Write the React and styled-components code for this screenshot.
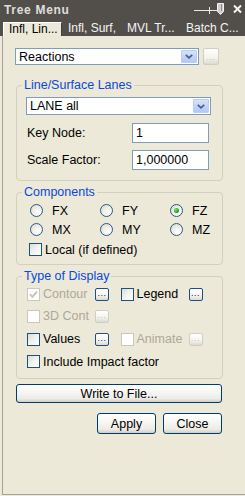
import React from 'react';
import styled, { createGlobalStyle, css } from 'styled-components';

const GlobalStyle = createGlobalStyle`
  html, body { margin: 0; padding: 0; background: #ece9d8; }
  body { font-family: "Liberation Sans", Arial, sans-serif; font-size: 12.5px; color: #000; }
  * { box-sizing: border-box; }
`;

const Window = styled.div`
  width: 245px;
  height: 496px;
  display: flex;
  flex-direction: column;
  overflow: hidden;
  background: #ece9d8;
`;

const TitleBar = styled.div`
  height: 20px;
  background: #524f4a;
  display: flex;
  align-items: center;
  padding-left: 4px;
`;

const Title = styled.div`
  flex: 1;
  color: #dedede;
  font-weight: bold;
  font-size: 12px;
  letter-spacing: 0.7px;
`;

const TitleIcons = styled.svg`
  display: block;
  flex: none;
`;

const TabStrip = styled.div`
  height: 16px;
  background: #524f4a;
  display: flex;
  align-items: flex-end;
  padding-left: 3px;
  overflow: hidden;
`;

const Tab = styled.div`
  width: 59px;
  height: 14px;
  padding-left: 6px;
  font-size: 12px;
  line-height: 13px;
  white-space: nowrap;
  flex: none;
  color: #f4f4f4;
  ${p => p.$active && css`
    background: #ece9d8;
    color: #000;
    border-top: 1px solid #ffffff;
    border-left: 1px solid #ffffff;
    border-right: 1px solid #404040;
    padding-left: 5px;
    overflow: hidden;
  `}
`;

const Body = styled.div`
  flex: 1;
  display: flex;
  padding-left: 2px;
  padding-bottom: 1px;
`;

const Panel = styled.div`
  flex: 1;
  border-left: 1px solid #a3a29c;
  border-bottom: 1px solid #a3a29c;
  padding: 12px 0 0 12px;
  display: flex;
  flex-direction: column;
  align-items: flex-start;
`;

const Row = styled.div`
  display: flex;
  align-items: center;
  gap: ${p => p.$gap || 0}px;
  height: ${p => (p.$h ? p.$h + 'px' : 'auto')};
`;

const SelectBox = styled.div`
  width: ${p => p.$w}px;
  height: ${p => p.$h}px;
  margin-top: ${p => p.$mt || 0}px;
  border: 1px solid #7f9db9;
  background: #fff;
  display: flex;
  align-items: center;
  padding: 1px 1px 1px 3px;
`;

const SelectText = styled.div`
  flex: 1;
  line-height: 14px;
`;

const DropButton = styled.div`
  width: 16px;
  align-self: stretch;
  border-radius: 1px;
  border: 1px solid #bccdf3;
  background: linear-gradient(180deg, #d6e2fb 0%, #c3d4fa 50%, #b3c8f6 100%);
  display: flex;
  align-items: center;
  justify-content: center;
`;

const DotsButton = styled.div`
  width: ${p => p.$w || 14}px;
  height: ${p => p.$h || 13}px;
  border-radius: 2px;
  border: 1px solid ${p => (p.$disabled ? '#d0cec2' : '#1b4f86')};
  background: linear-gradient(180deg, #ffffff 0%, #f4f3ee 60%, #dcd9cf 100%);
  color: ${p => (p.$disabled ? '#c4c2b6' : '#1a1a1a')};
  font-size: 9px;
  line-height: 1;
  display: flex;
  align-items: flex-end;
  justify-content: center;
  padding-bottom: 2px;
  letter-spacing: 0.5px;
  flex: none;
`;

const Group = styled.fieldset`
  margin: ${p => p.$mt}px 0 0 1px;
  width: 207px;
  border: 1px solid #d0d0bf;
  border-radius: 4px;
  padding: ${p => p.$pad};
  min-width: 0;
`;

const Legend = styled.legend`
  color: #0b48d8;
  padding: 0 2px;
  margin-left: ${p => p.$ml}px;
  font-size: 12.5px;
  line-height: 14px;
`;

const FieldRow = styled.div`
  display: flex;
  align-items: center;
  margin-top: ${p => p.$mt}px;
`;

const FieldLabel = styled.div`
  width: 106px;
  padding-left: 1px;
`;

const TextInput = styled.div`
  width: 77px;
  height: 20px;
  border: 1px solid #7f9db9;
  background: #fff;
  padding-left: 3px;
  line-height: 18px;
`;

const RadioGrid = styled.div`
  display: grid;
  grid-template-columns: 70px 70px 60px;
  grid-auto-rows: 19px;
  align-items: center;
  margin-top: 2px;
`;

const RadioItem = styled.div`
  display: flex;
  align-items: center;
  gap: 9px;
`;

const RadioCircle = styled.span`
  width: 13px;
  height: 13px;
  border-radius: 50%;
  border: 1px solid #2c5a8a;
  background: radial-gradient(circle at 65% 70%, #ffffff 0%, #f0efe8 45%, #d4d3cc 100%);
  display: flex;
  align-items: center;
  justify-content: center;
  flex: none;
  &::after {
    content: '';
    display: ${p => (p.$checked ? 'block' : 'none')};
    width: 5px;
    height: 5px;
    border-radius: 50%;
    background: radial-gradient(circle at 35% 35%, #7ee07e 0%, #21a121 60%, #198019 100%);
  }
`;

const CheckItem = styled.div`
  display: flex;
  align-items: center;
  gap: 3px;
  width: ${p => (p.$w ? p.$w + 'px' : 'auto')};
  color: ${p => (p.$disabled ? '#aca899' : '#000')};
  margin-left: ${p => p.$ml || 0}px;
  flex: none;
`;

const CheckBox = styled.span`
  width: 13px;
  height: 13px;
  border: 1px solid ${p => (p.$disabled ? '#cac8bb' : '#1c5180')};
  background: ${p =>
    p.$disabled ? '#fff' : 'linear-gradient(135deg, #dcdcd7 0%, #f2f2ee 50%, #ffffff 100%)'};
  display: flex;
  align-items: center;
  justify-content: center;
  flex: none;
`;

const DisplayRows = styled.div`
  display: flex;
  flex-direction: column;
`;

const DisplayRow = styled.div`
  height: ${p => p.$h}px;
  display: flex;
  align-items: center;
`;

const Cell = styled.div`
  width: 98px;
  display: flex;
  align-items: center;
`;

const PushButton = styled.div`
  width: ${p => p.$w}px;
  height: ${p => p.$h}px;
  border: 1px solid #003c74;
  border-radius: 3px;
  background: linear-gradient(180deg, #ffffff 0%, #f7f7f4 40%, #ecebe6 80%, #d6d0c5 100%);
  display: flex;
  align-items: center;
  justify-content: center;
  font-size: 12.5px;
  box-shadow: inset 0 -1px 0 #d6d0c5;
`;

const WideButton = styled(PushButton)`
  margin-top: 5px;
  margin-left: 1px;
`;

const ButtonRow = styled.div`
  width: 206px;
  margin-left: 1px;
  margin-top: 10px;
  display: flex;
  justify-content: flex-end;
  gap: 7px;
`;

const Chevron = () => (
  <svg width="8" height="5" viewBox="0 0 8 5">
    <path d="M0.8 0.8 L4 3.8 L7.2 0.8" fill="none" stroke="#4d6185" strokeWidth="1.8" />
  </svg>
);

const Check = ({ color }) => (
  <svg width="9" height="9" viewBox="0 0 9 9">
    <path d="M1 4.2 L3.4 6.8 L8 1.6" fill="none" stroke={color} strokeWidth="1.8" />
  </svg>
);

const Radio = ({ label, checked }) => (
  <RadioItem>
    <RadioCircle $checked={checked} />
    <span>{label}</span>
  </RadioItem>
);

const Checkbox = ({ label, checked, disabled, w, ml }) => (
  <CheckItem $disabled={disabled} $w={w} $ml={ml}>
    <CheckBox $disabled={disabled}>{checked && <Check color={disabled ? '#c4c2b6' : '#21a121'} />}</CheckBox>
    <span>{label}</span>
  </CheckItem>
);

export default function App() {
  return (
    <>
      <GlobalStyle />
      <Window>
        <TitleBar>
          <Title>Tree Menu</Title>
          <TitleIcons width="55" height="20" viewBox="0 0 55 20">
            <line x1="4" y1="10.5" x2="27" y2="10.5" stroke="#e8e8e8" strokeWidth="1" />
            <line x1="19.5" y1="7" x2="19.5" y2="14" stroke="#e8e8e8" strokeWidth="1" />
            <path d="M27.5 3.5 H33.5 V11.5 L30.5 14.5 L27.5 11.5 Z" fill="#cfcfcf" stroke="#f2f2f2" strokeWidth="1" />
            <line x1="31.5" y1="4" x2="31.5" y2="11" stroke="#8a8a8a" strokeWidth="1" />
            <path d="M44 5.5 L51 12.5 M51 5.5 L44 12.5" stroke="#f4f4f4" strokeWidth="2" />
          </TitleIcons>
        </TitleBar>
        <TabStrip>
          <Tab $active>Infl, Lin...</Tab>
          <Tab>Infl, Surf,</Tab>
          <Tab>MVL Tr...</Tab>
          <Tab>Batch C...</Tab>
        </TabStrip>
        <Body>
          <Panel>
            <Row $gap={4}>
              <SelectBox $w={184} $h={17}>
                <SelectText>Reactions</SelectText>
                <DropButton><Chevron /></DropButton>
              </SelectBox>
              <DotsButton $disabled $w={16} $h={17}>...</DotsButton>
            </Row>

            <Group $mt={13} $pad="0 11px 10px 9px">
              <Legend $ml={-4}>Line/Surface Lanes</Legend>
              <SelectBox $w={185} $h={18} $mt={5}>
                <SelectText>LANE all</SelectText>
                <DropButton><Chevron /></DropButton>
              </SelectBox>
              <FieldRow $mt={8}>
                <FieldLabel>Key Node:</FieldLabel>
                <TextInput>1</TextInput>
              </FieldRow>
              <FieldRow $mt={7}>
                <FieldLabel>Scale Factor:</FieldLabel>
                <TextInput>1,000000</TextInput>
              </FieldRow>
            </Group>

            <Group $mt={4} $pad="0 8px 4px 13px">
              <Legend $ml={-8}>Components</Legend>
              <RadioGrid>
                <Radio label="FX" />
                <Radio label="FY" />
                <Radio label="FZ" checked />
                <Radio label="MX" />
                <Radio label="MY" />
                <Radio label="MZ" />
              </RadioGrid>
              <Row $h={21}>
                <Checkbox label="Local (if defined)" ml={-1} />
              </Row>
            </Group>

            <Group $mt={4} $pad="0 8px 6px 10px">
              <Legend $ml={-5}>Type of Display</Legend>
              <DisplayRows>
                <DisplayRow $h={22}>
                  <Cell>
                    <Checkbox label="Contour" checked disabled w={68} />
                    <DotsButton>...</DotsButton>
                  </Cell>
                  <Cell>
                    <Checkbox label="Legend" w={68} />
                    <DotsButton>...</DotsButton>
                  </Cell>
                </DisplayRow>
                <DisplayRow $h={22}>
                  <Cell>
                    <Checkbox label="3D Cont" disabled w={68} />
                    <DotsButton $disabled>...</DotsButton>
                  </Cell>
                </DisplayRow>
                <DisplayRow $h={24}>
                  <Cell>
                    <Checkbox label="Values" w={68} />
                    <DotsButton>...</DotsButton>
                  </Cell>
                  <Cell>
                    <Checkbox label="Animate" disabled w={68} />
                    <DotsButton $disabled>...</DotsButton>
                  </Cell>
                </DisplayRow>
                <DisplayRow $h={21}>
                  <Checkbox label="Include Impact factor" />
                </DisplayRow>
              </DisplayRows>
            </Group>

            <WideButton $w={206} $h={19}>Write to File...</WideButton>
            <ButtonRow>
              <PushButton $w={59} $h={21}>Apply</PushButton>
              <PushButton $w={59} $h={21}>Close</PushButton>
            </ButtonRow>
          </Panel>
        </Body>
      </Window>
    </>
  );
}
